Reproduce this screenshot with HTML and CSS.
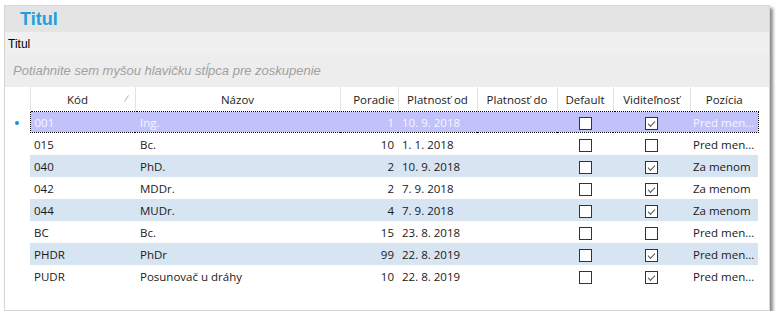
FILE: index.html
```html
<!DOCTYPE html>
<html lang="sk">
<head>
    <meta charset="UTF-8">
    <title>Titul</title>
    <link rel="stylesheet" href="styles.css">
</head>
<body>
<div class="okno">
    <div class="titulok">Titul</div>
    <div class="popis">Titul</div>
    <div class="zoskupenie">Potiahnite sem myšou hlavičku stĺpca pre zoskupenie</div>

    <div class="mriezka">
        <table class="tabulka">
            <colgroup>
                <col class="c-ind">
                <col class="c-kod">
                <col class="c-nazov">
                <col class="c-poradie">
                <col class="c-od">
                <col class="c-do">
                <col class="c-def">
                <col class="c-vid">
                <col class="c-poz">
            </colgroup>
            <thead>
                <tr>
                    <th></th>
                    <th class="h-kod">Kód<svg class="sipka" width="5" height="7" viewBox="0 0 5 7"><path d="M4.5 0.5 L0.5 6.5" stroke="#b0b0b0" stroke-width="1" fill="none"/></svg></th>
                    <th>Názov</th>
                    <th class="h-vpravo">Poradie</th>
                    <th>Platnosť od</th>
                    <th>Platnosť do</th>
                    <th>Default</th>
                    <th>Viditeľnosť</th>
                    <th>Pozícia</th>
                </tr>
            </thead>
            <tbody>
                <tr class="vybrany">
                    <td class="ind"><span class="bodka"></span></td>
                    <td>001</td><td class="nazov">Ing.</td><td class="cislo">1</td><td>10. 9. 2018</td><td></td>
                    <td class="stred"><span class="box"></span></td>
                    <td class="stred"><span class="box on"></span></td>
                    <td class="poz">Pred men...</td>
                </tr>
                <tr>
                    <td class="ind"></td>
                    <td>015</td><td class="nazov">Bc.</td><td class="cislo">10</td><td>1. 1. 2018</td><td></td>
                    <td class="stred"><span class="box"></span></td>
                    <td class="stred"><span class="box"></span></td>
                    <td class="poz">Pred men...</td>
                </tr>
                <tr class="alt">
                    <td class="ind"></td>
                    <td>040</td><td class="nazov">PhD.</td><td class="cislo">2</td><td>10. 9. 2018</td><td></td>
                    <td class="stred"><span class="box"></span></td>
                    <td class="stred"><span class="box on"></span></td>
                    <td class="poz">Za menom</td>
                </tr>
                <tr>
                    <td class="ind"></td>
                    <td>042</td><td class="nazov">MDDr.</td><td class="cislo">2</td><td>7. 9. 2018</td><td></td>
                    <td class="stred"><span class="box"></span></td>
                    <td class="stred"><span class="box on"></span></td>
                    <td class="poz">Za menom</td>
                </tr>
                <tr class="alt">
                    <td class="ind"></td>
                    <td>044</td><td class="nazov">MUDr.</td><td class="cislo">4</td><td>7. 9. 2018</td><td></td>
                    <td class="stred"><span class="box"></span></td>
                    <td class="stred"><span class="box on"></span></td>
                    <td class="poz">Za menom</td>
                </tr>
                <tr>
                    <td class="ind"></td>
                    <td>BC</td><td class="nazov">Bc.</td><td class="cislo">15</td><td>23. 8. 2018</td><td></td>
                    <td class="stred"><span class="box"></span></td>
                    <td class="stred"><span class="box"></span></td>
                    <td class="poz">Pred men...</td>
                </tr>
                <tr class="alt">
                    <td class="ind"></td>
                    <td>PHDR</td><td class="nazov">PhDr</td><td class="cislo">99</td><td>22. 8. 2019</td><td></td>
                    <td class="stred"><span class="box"></span></td>
                    <td class="stred"><span class="box on"></span></td>
                    <td class="poz">Pred men...</td>
                </tr>
                <tr>
                    <td class="ind"></td>
                    <td>PUDR</td><td class="nazov">Posunovač u dráhy</td><td class="cislo">10</td><td>22. 8. 2019</td><td></td>
                    <td class="stred"><span class="box"></span></td>
                    <td class="stred"><span class="box on"></span></td>
                    <td class="poz">Pred men...</td>
                </tr>
            </tbody>
        </table>
    </div>
</div>
</body>
</html>
```

FILE: styles.css
```css
body {
    margin: 0;
    background: #ffffff;
}

.okno {
    margin: 5px 0 0 4px;
    width: 764px;
    height: 304px;
    border: 1px solid #d6d6d6;
    background: #ffffff;
    box-shadow: 3px 3px 3px rgba(0, 0, 0, 0.45);
    display: flex;
    flex-direction: column;
}

.titulok {
    height: 26px;
    background: #e4e4e4;
    color: #22a0dc;
    font-family: "Liberation Sans", Arial, sans-serif;
    font-weight: bold;
    font-size: 18px;
    line-height: 27px;
    padding-left: 15px;
}

.popis {
    height: 23px;
    background: #f0f0f0;
    font-family: "Liberation Sans", Arial, sans-serif;
    font-size: 12px;
    line-height: 25px;
    padding-left: 3px;
    color: #000;
}

.zoskupenie {
    height: 32px;
    background: #ededed;
    font-family: "Liberation Sans", Arial, sans-serif;
    font-style: italic;
    font-size: 13px;
    line-height: 31px;
    padding-left: 8px;
    color: #a0a0a0;
}

.mriezka {
    flex: 1;
    background: #ffffff;
}

.tabulka {
    border-collapse: collapse;
    table-layout: fixed;
    width: 753px;
    font-family: "Open Sans", "Noto Sans", sans-serif;
    font-size: 11.5px;
    color: #1a1a1a;
}

.c-ind { width: 25px; }
.c-kod { width: 105px; }
.c-nazov { width: 205px; }
.c-poradie { width: 58px; }
.c-od { width: 79px; }
.c-do { width: 80px; }
.c-def { width: 56px; }
.c-vid { width: 77px; }
.c-poz { width: 68px; }

.tabulka th {
    height: 24px;
    padding: 0;
    font-weight: normal;
    text-align: center;
    border-left: 1px solid #e3e3e3;
    white-space: nowrap;
}
.tabulka th:first-child {
    border-left: none;
}
.h-kod {
    position: relative;
    padding-right: 10px !important;
}
.sipka {
    position: absolute;
    right: 6px;
    top: 8px;
}
.h-vpravo {
    text-align: right !important;
    padding-right: 3px !important;
}

.tabulka td {
    height: 22px;
    padding: 0 0 0 4px;
    white-space: nowrap;
    overflow: hidden;
}
.tabulka td.ind {
    background: #ffffff;
    padding: 0;
    text-align: center;
}
.tabulka td.nazov {
    padding-left: 5px;
}
.tabulka td.cislo {
    text-align: right;
    padding: 0 4px 0 0;
}
.tabulka td.stred {
    text-align: center;
    padding: 0;
}
.tabulka td.poz {
    padding-left: 3px;
}

.alt td {
    background: #d7e4f2;
}
.vybrany td {
    height: 20px;
    background: #c2c2fb;
    color: #f6f6ff;
    border-top: 1px dotted #000;
    border-bottom: 1px dotted #000;
}
.vybrany td.ind {
    border: none;
    background: #ffffff;
}
.vybrany td:nth-child(2) {
    border-left: 1px dotted #000;
}
.vybrany td:last-child {
    border-right: 1px dotted #000;
}

.bodka {
    display: inline-block;
    width: 4px;
    height: 4px;
    border-radius: 50%;
    background: #1e90dc;
    vertical-align: middle;
}

.box {
    display: inline-block;
    width: 11px;
    height: 11px;
    border: 1px solid #333;
    background: #fff;
    vertical-align: middle;
    position: relative;
}
.box.on::after {
    content: "";
    position: absolute;
    left: 2px;
    top: 1px;
    width: 6px;
    height: 3px;
    border-left: 1px solid #555;
    border-bottom: 1px solid #555;
    transform: translate(0, 2px) rotate(-45deg);
}
```
